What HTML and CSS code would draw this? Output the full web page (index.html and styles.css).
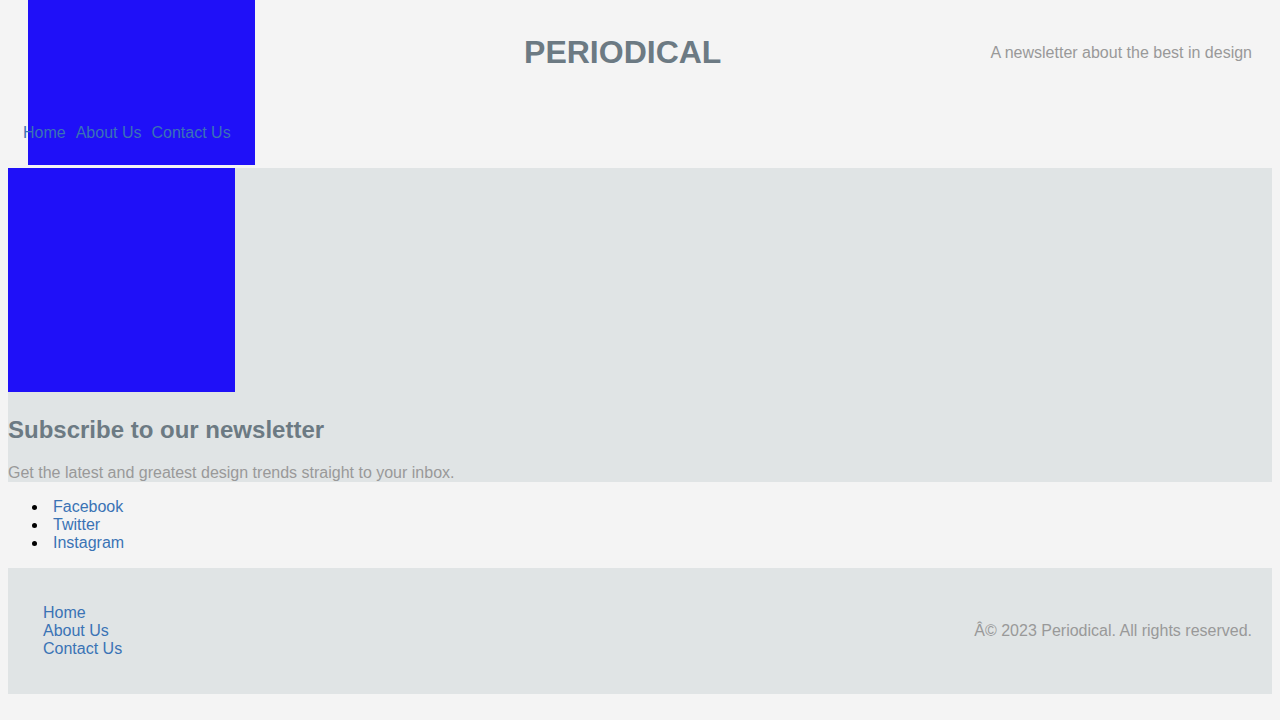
FILE: index.html
```html
<!DOCTYPE html>
<html lang="en">
<head>
<meta charset="utf-8">
<title>Periodical</title>
<link rel="stylesheet" href="styles.css">
</head>
<body>
<header class="site-header">
  <div class="brand">
    <div class="logo"></div>
    <nav class="main-nav">
      <a href="#">Home</a>
      <a href="#">About Us</a>
      <a href="#">Contact Us</a>
    </nav>
  </div>
  <h1 class="site-title">PERIODICAL</h1>
  <p class="tagline">A newsletter about the best in design</p>
</header>
<section class="newsletter">
  <div class="hero-image"></div>
  <h2 class="newsletter-title">Subscribe to our newsletter</h2>
  <p class="newsletter-text">Get the latest and greatest design trends straight to your inbox.</p>
</section>
<ul class="social">
  <li><a href="#">Facebook</a></li>
  <li><a href="#">Twitter</a></li>
  <li><a href="#">Instagram</a></li>
</ul>
<footer class="site-footer">
  <ul class="footer-nav">
    <li><a href="#">Home</a></li>
    <li><a href="#">About Us</a></li>
    <li><a href="#">Contact Us</a></li>
  </ul>
  <p class="copyright">Â© 2023 Periodical. All rights reserved.</p>
</footer>
</body>
</html>
```
FILE: styles.css
```css
body {
  margin: 0 8px 8px;
  background: #f4f4f4;
  font-family: "Liberation Sans", Arial, sans-serif;
  font-size: 16px;
  color: #000;
}

a {
  color: #3a73b5;
  text-decoration: none;
}

.site-header {
  display: flex;
  justify-content: space-between;
  align-items: flex-start;
  height: 168px;
  padding: 0 20px;
}

.brand {
  position: relative;
  width: 227px;
}

.logo {
  width: 227px;
  height: 165px;
  background: #1f10f8;
}

.main-nav {
  position: absolute;
  left: -5px;
  top: 124px;
  display: flex;
  gap: 10px;
  line-height: 18px;
}

.site-title {
  margin: 34px 0 0;
  font-size: 32px;
  line-height: 37px;
  color: #6c7a83;
}

.tagline {
  margin: 44px 0 0;
  line-height: 18px;
  color: #999;
}

.newsletter {
  background: #e0e4e5;
}

.hero-image {
  display: inline-block;
  width: 227px;
  height: 224px;
  background: #1f10f8;
}

.newsletter-title {
  margin: 20px 0;
  font-size: 24px;
  color: #6c7a83;
}

.newsletter-text {
  margin: 0;
  color: #999;
}

.social {
  margin: 16px 0;
  padding-left: 40px;
}

.social a {
  margin-left: 5px;
}

.site-footer {
  display: flex;
  justify-content: space-between;
  align-items: center;
  padding: 20px;
  background: #e0e4e5;
}

.footer-nav {
  list-style: none;
  margin: 16px 0;
  padding-left: 15px;
}

.copyright {
  margin: 0;
  color: #999;
}
```
